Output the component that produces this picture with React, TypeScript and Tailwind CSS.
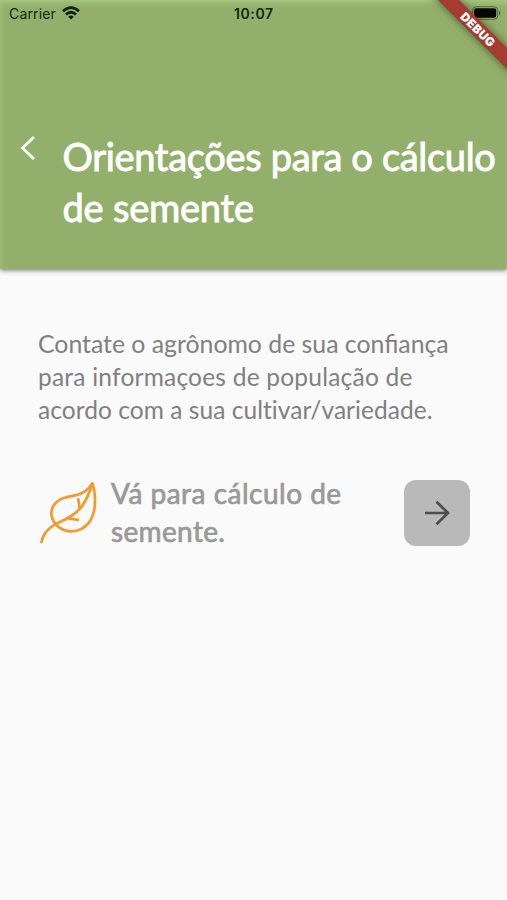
import type { ReactNode } from 'react';

function Line({ className, children }: { className: string; children: ReactNode }) {
  return <span className={`block whitespace-nowrap ${className}`}>{children}</span>;
}

function WifiIcon() {
  return (
    <svg viewBox="0 0 18 14" className="h-[14px] w-[18px]" fill="none" stroke="#10200c" strokeWidth="2.8">
      <path d="M1 5.2 Q9 -2 17 5.2" />
      <path d="M4 8.5 Q9 4 14 8.5" />
      <path d="M6.2 10.7 Q9 8.3 11.8 10.7 L9 13.5Z" fill="#10200c" stroke="none" />
    </svg>
  );
}

function StatusBar() {
  return (
    <div className="relative flex h-7 items-center font-['Inter',sans-serif] text-[14px] leading-7 text-[#14260e]">
      <span className="ml-[9px] tracking-[0.15px]">Carrier</span>
      <span className="ml-[6px] mt-[-2px]"><WifiIcon /></span>
      <span className="absolute left-[234px] top-0 text-[14px] font-semibold tracking-[0.6px]">10:07</span>
      <svg viewBox="0 0 29 14" className="absolute left-[472px] top-[6px] h-[14px] w-[29px]" fill="none">
        <rect x="0.7" y="0.7" width="25" height="12.6" rx="3.5" stroke="#4e6b3d" strokeWidth="1" />
        <rect x="2.2" y="2.2" width="22" height="9.6" rx="2" fill="#050804" />
        <path d="M27 4.8v4.4q1.5-.7 1.5-2.2T27 4.8Z" fill="#4e6b3d" />
      </svg>
    </div>
  );
}

function DebugBanner() {
  return (
    <div className="absolute right-0 top-0 h-[90px] w-[90px] overflow-hidden">
      <div className="absolute left-[-9px] top-[22px] flex h-[15px] w-[140px] rotate-45 items-center justify-center bg-[#a63c31] shadow-[0_0_8px_rgba(0,0,0,0.5)]">
        <span className="font-['Inter',sans-serif] text-[12px] font-black leading-none tracking-[0.3px] text-white">DEBUG</span>
      </div>
    </div>
  );
}

function LeafIcon() {
  return (
    <svg viewBox="0 0 60 64" className="h-[64px] w-[60px]" fill="none" stroke="#f29a2e" strokeWidth="2.7" strokeLinecap="round" strokeLinejoin="round">
      <path d="M54.3 2.5C50 9 44 13 38 14.2C33 15 30 15.5 25 17.3C16 21 12.5 28 13.5 34C15 44 24 50.3 33 50.3C48 50.3 57 38 57 20C57 12 56 6 54.3 2.5Z" />
      <path d="M54.3 2.5C52 10 49 18 43.7 25.7C36 35 27 38.5 17 43.3C9 48 4.5 54 3.5 61" />
      <path d="M40.3 18.3L41.6 27.5" />
      <path d="M30.5 37.3L40 38.9" />
    </svg>
  );
}

export default function App() {
  return (
    <div className="relative flex h-[900px] w-[507px] flex-col overflow-hidden bg-[#fafafa] font-['Lato',sans-serif]">
      <header className="h-[269px] shrink-0 bg-[#92b06b] shadow-[inset_0_5px_5px_-2px_#a6c681,inset_4px_0_4px_-2px_#9dbb78,0_1px_5px_rgba(0,0,0,0.6)]">
        <StatusBar />
        <div className="flex pt-[103px]">
          <button className="ml-[20px] mt-[4px] h-[26px] w-[16px]" aria-label="Voltar">
            <svg viewBox="0 0 16 26" className="h-[26px] w-[16px]" fill="none" stroke="#fff" strokeWidth="2.7">
              <path d="M14 2L2.5 13L14 24" />
            </svg>
          </button>
          <h1 className="ml-[26.5px] text-[38px] leading-[51px] text-white [-webkit-text-stroke:0.9px_white]">
            <Line className="tracking-[-0.33px]">Orientações para o cálculo</Line>
            <Line className="tracking-[-0.22px]">de semente</Line>
          </h1>
        </div>
      </header>
      <main className="px-[38px] pt-[58px]">
        <p className="text-[24.5px] leading-[33px] text-[#808080]">
          <Line className="text-[24.8px]">Contate o agrônomo de sua confiança</Line>
          <Line className="tracking-[0.22px]">para informaçoes de população de</Line>
          <Line className="tracking-[0.05px]">acordo com a sua cultivar/variedade.</Line>
        </p>
        <div className="mt-[48px] flex items-center">
          <LeafIcon />
          <p className="mb-[2px] ml-[13px] text-[28px] leading-[38px] text-[#999] [-webkit-text-stroke:0.7px_#999]">
            <Line className="tracking-[0.5px]">Vá para cálculo de</Line>
            <Line className="tracking-[0.35px]">semente.</Line>
          </p>
          <button className="ml-auto mr-[-1px] flex h-[66px] w-[66px] items-center justify-center rounded-[12px] bg-[#b9b9b9]" aria-label="Continuar">
            <svg viewBox="0 0 26 26" className="h-[26px] w-[26px]" fill="none" stroke="#4d4d4d" strokeWidth="2.7">
              <path d="M1 13H24M12.5 1.7L24 13L12.5 24.3" />
            </svg>
          </button>
        </div>
      </main>
      <DebugBanner />
    </div>
  );
}
